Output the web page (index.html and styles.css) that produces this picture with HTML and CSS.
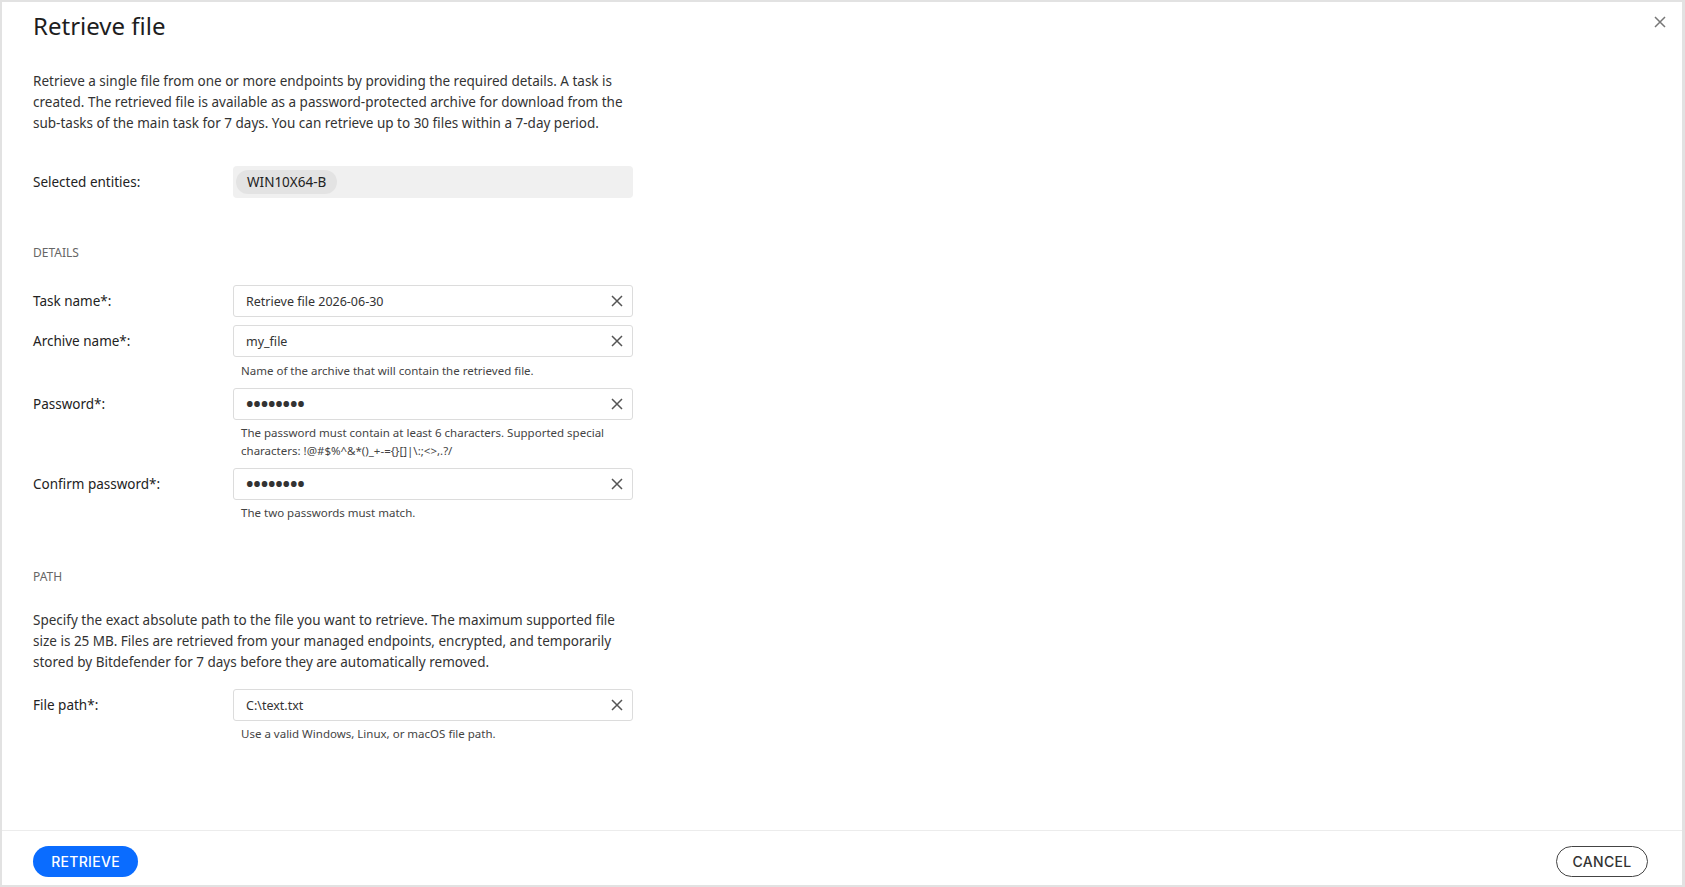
FILE: index.html
```html
<!DOCTYPE html>
<html lang="en">
<head>
<meta charset="utf-8">
<title>Retrieve file</title>
<link rel="stylesheet" href="styles.css">
</head>
<body>
<div class="dialog">
  <div class="header">
    <h1 class="title">Retrieve file</h1>
    <button class="close" aria-label="Close">
      <svg width="12" height="12" viewBox="0 0 12 12"><path d="M1 1L11 11M11 1L1 11" stroke="#777" stroke-width="1.5" fill="none"/></svg>
    </button>
  </div>
  <div class="body">
    <p class="desc">Retrieve a single file from one or more endpoints by providing the required details. A task is created. The retrieved file is available as a password-protected archive for download from the sub&#8209;tasks of the main task for 7 days. You can retrieve up to 30 files within a 7-day period.</p>

    <div class="field entities-field">
      <div class="label">Selected entities:</div>
      <div class="entities"><span class="chip">WIN10X64-B</span></div>
    </div>

    <div class="section">DETAILS</div>

    <div class="field">
      <div class="label">Task name*:</div>
      <div class="input"><span class="value">Retrieve file 2026-06-30</span><span class="clear"><svg width="12" height="12" viewBox="0 0 12 12"><path d="M1 1L11 11M11 1L1 11" stroke="#555" stroke-width="1.5" fill="none"/></svg></span></div>
    </div>
    <div class="field">
      <div class="label">Archive name*:</div>
      <div class="input"><span class="value">my_file</span><span class="clear"><svg width="12" height="12" viewBox="0 0 12 12"><path d="M1 1L11 11M11 1L1 11" stroke="#555" stroke-width="1.5" fill="none"/></svg></span></div>
      <div class="hint hint-a">Name of the archive that will contain the retrieved file.</div>
    </div>
    <div class="field">
      <div class="label">Password*:</div>
      <div class="input"><span class="value dots">••••••••</span><span class="clear"><svg width="12" height="12" viewBox="0 0 12 12"><path d="M1 1L11 11M11 1L1 11" stroke="#555" stroke-width="1.5" fill="none"/></svg></span></div>
      <div class="hint">The password must contain at least 6 characters. Supported special characters: !@#$%^&amp;*()_+-={}[]|\:;&lt;&gt;,.?/</div>
    </div>
    <div class="field">
      <div class="label">Confirm password*:</div>
      <div class="input"><span class="value dots">••••••••</span><span class="clear"><svg width="12" height="12" viewBox="0 0 12 12"><path d="M1 1L11 11M11 1L1 11" stroke="#555" stroke-width="1.5" fill="none"/></svg></span></div>
      <div class="hint">The two passwords must match.</div>
    </div>

    <div class="section section-path">PATH</div>
    <p class="desc desc-path">Specify the exact absolute path to the file you want to retrieve. The maximum supported file size is 25 MB. Files are retrieved from your managed endpoints, encrypted, and temporarily stored by Bitdefender for 7 days before they are automatically removed.</p>

    <div class="field field-path">
      <div class="label">File path*:</div>
      <div class="input"><span class="value">C:\text.txt</span><span class="clear"><svg width="12" height="12" viewBox="0 0 12 12"><path d="M1 1L11 11M11 1L1 11" stroke="#555" stroke-width="1.5" fill="none"/></svg></span></div>
      <div class="hint">Use a valid Windows, Linux, or macOS file path.</div>
    </div>
  </div>
  <div class="footer">
    <button class="btn btn-primary">RETRIEVE</button>
    <button class="btn btn-outline">CANCEL</button>
  </div>
</div>
</body>
</html>
```

FILE: styles.css
```css
* { box-sizing: border-box; }
html, body { margin: 0; padding: 0; background: #fff; }
body {
  font-family: "Noto Sans", "Open Sans", sans-serif;
  color: #222;
}
.dialog {
  width: 1685px;
  height: 887px;
  border-style: solid;
  border-color: #e2e2e2;
  border-width: 2px 3px 2px 2px;
  display: flex;
  flex-direction: column;
}
.header {
  display: flex;
  justify-content: space-between;
  align-items: flex-start;
  padding: 9px 16px 0 31px;
}
.title {
  margin: 0;
  font-size: 24px;
  font-weight: 400;
  line-height: 30px;
  color: #1e1e1e;
}
.close {
  border: 0;
  background: none;
  padding: 0;
  margin-top: 5px;
  width: 12px;
  height: 12px;
  display: flex;
}
.body {
  flex: 1;
  padding: 0 31px;
}
.desc {
  margin: 30px 0 0;
  width: 600px;
  font-size: 13.5px;
  line-height: 21px;
  color: #333;
}
.field {
  display: grid;
  grid-template-columns: 200px 400px;
  align-items: center;
  margin-top: 8px;
}
.entities-field { margin-top: 32px; }
.field-path { margin-top: 16px; }
.label {
  font-size: 13.5px;
  color: #222;
}
.entities {
  height: 32px;
  background: #f0f0f0;
  border-radius: 4px;
  display: flex;
  align-items: center;
  padding-left: 3px;
}
.chip {
  background: #e3e3e3;
  border-radius: 12px;
  height: 24px;
  line-height: 24px;
  padding: 0 11px;
  font-size: 13.5px;
  color: #222;
}
.section {
  margin-top: 47px;
  margin-bottom: 24px;
  font-size: 12px;
  line-height: 16px;
  color: #666;
}
.section-path { margin-top: 47px; margin-bottom: 0; }
.input {
  height: 32px;
  border: 1px solid #dcdcdc;
  border-radius: 3px;
  display: flex;
  align-items: center;
  justify-content: space-between;
  padding: 0 9px 0 12px;
}
.value {
  font-size: 12.5px;
  color: #333;
}
.dots {
  font-size: 20px;
  line-height: 1;
  letter-spacing: -0.2px;
  font-weight: 700;
  color: #333;
}
.clear { display: flex; }
.hint {
  grid-column: 2;
  padding-left: 8px;
  margin-top: 4px;
  font-size: 11.5px;
  line-height: 18px;
  color: #444;
}
.hint-a { margin-top: 5px; }
.desc-path { margin-top: 25px; }
.footer {
  border-top: 1px solid #ececec;
  display: flex;
  justify-content: space-between;
  padding: 15px 34px 0 31px;
  height: 55px;
  align-items: flex-start;
}
.btn {
  height: 31px;
  border-radius: 16px;
  font-family: "Inter", "Noto Sans", sans-serif;
  font-size: 14px;
  font-weight: 500;
  letter-spacing: 0.3px;
  cursor: pointer;
}
.btn-primary {
  width: 105px;
  background: #0a6cff;
  color: #fff;
  border: 0;
}
.btn-outline {
  width: 92px;
  background: #fff;
  color: #333;
  border: 1px solid #444;
}
```
